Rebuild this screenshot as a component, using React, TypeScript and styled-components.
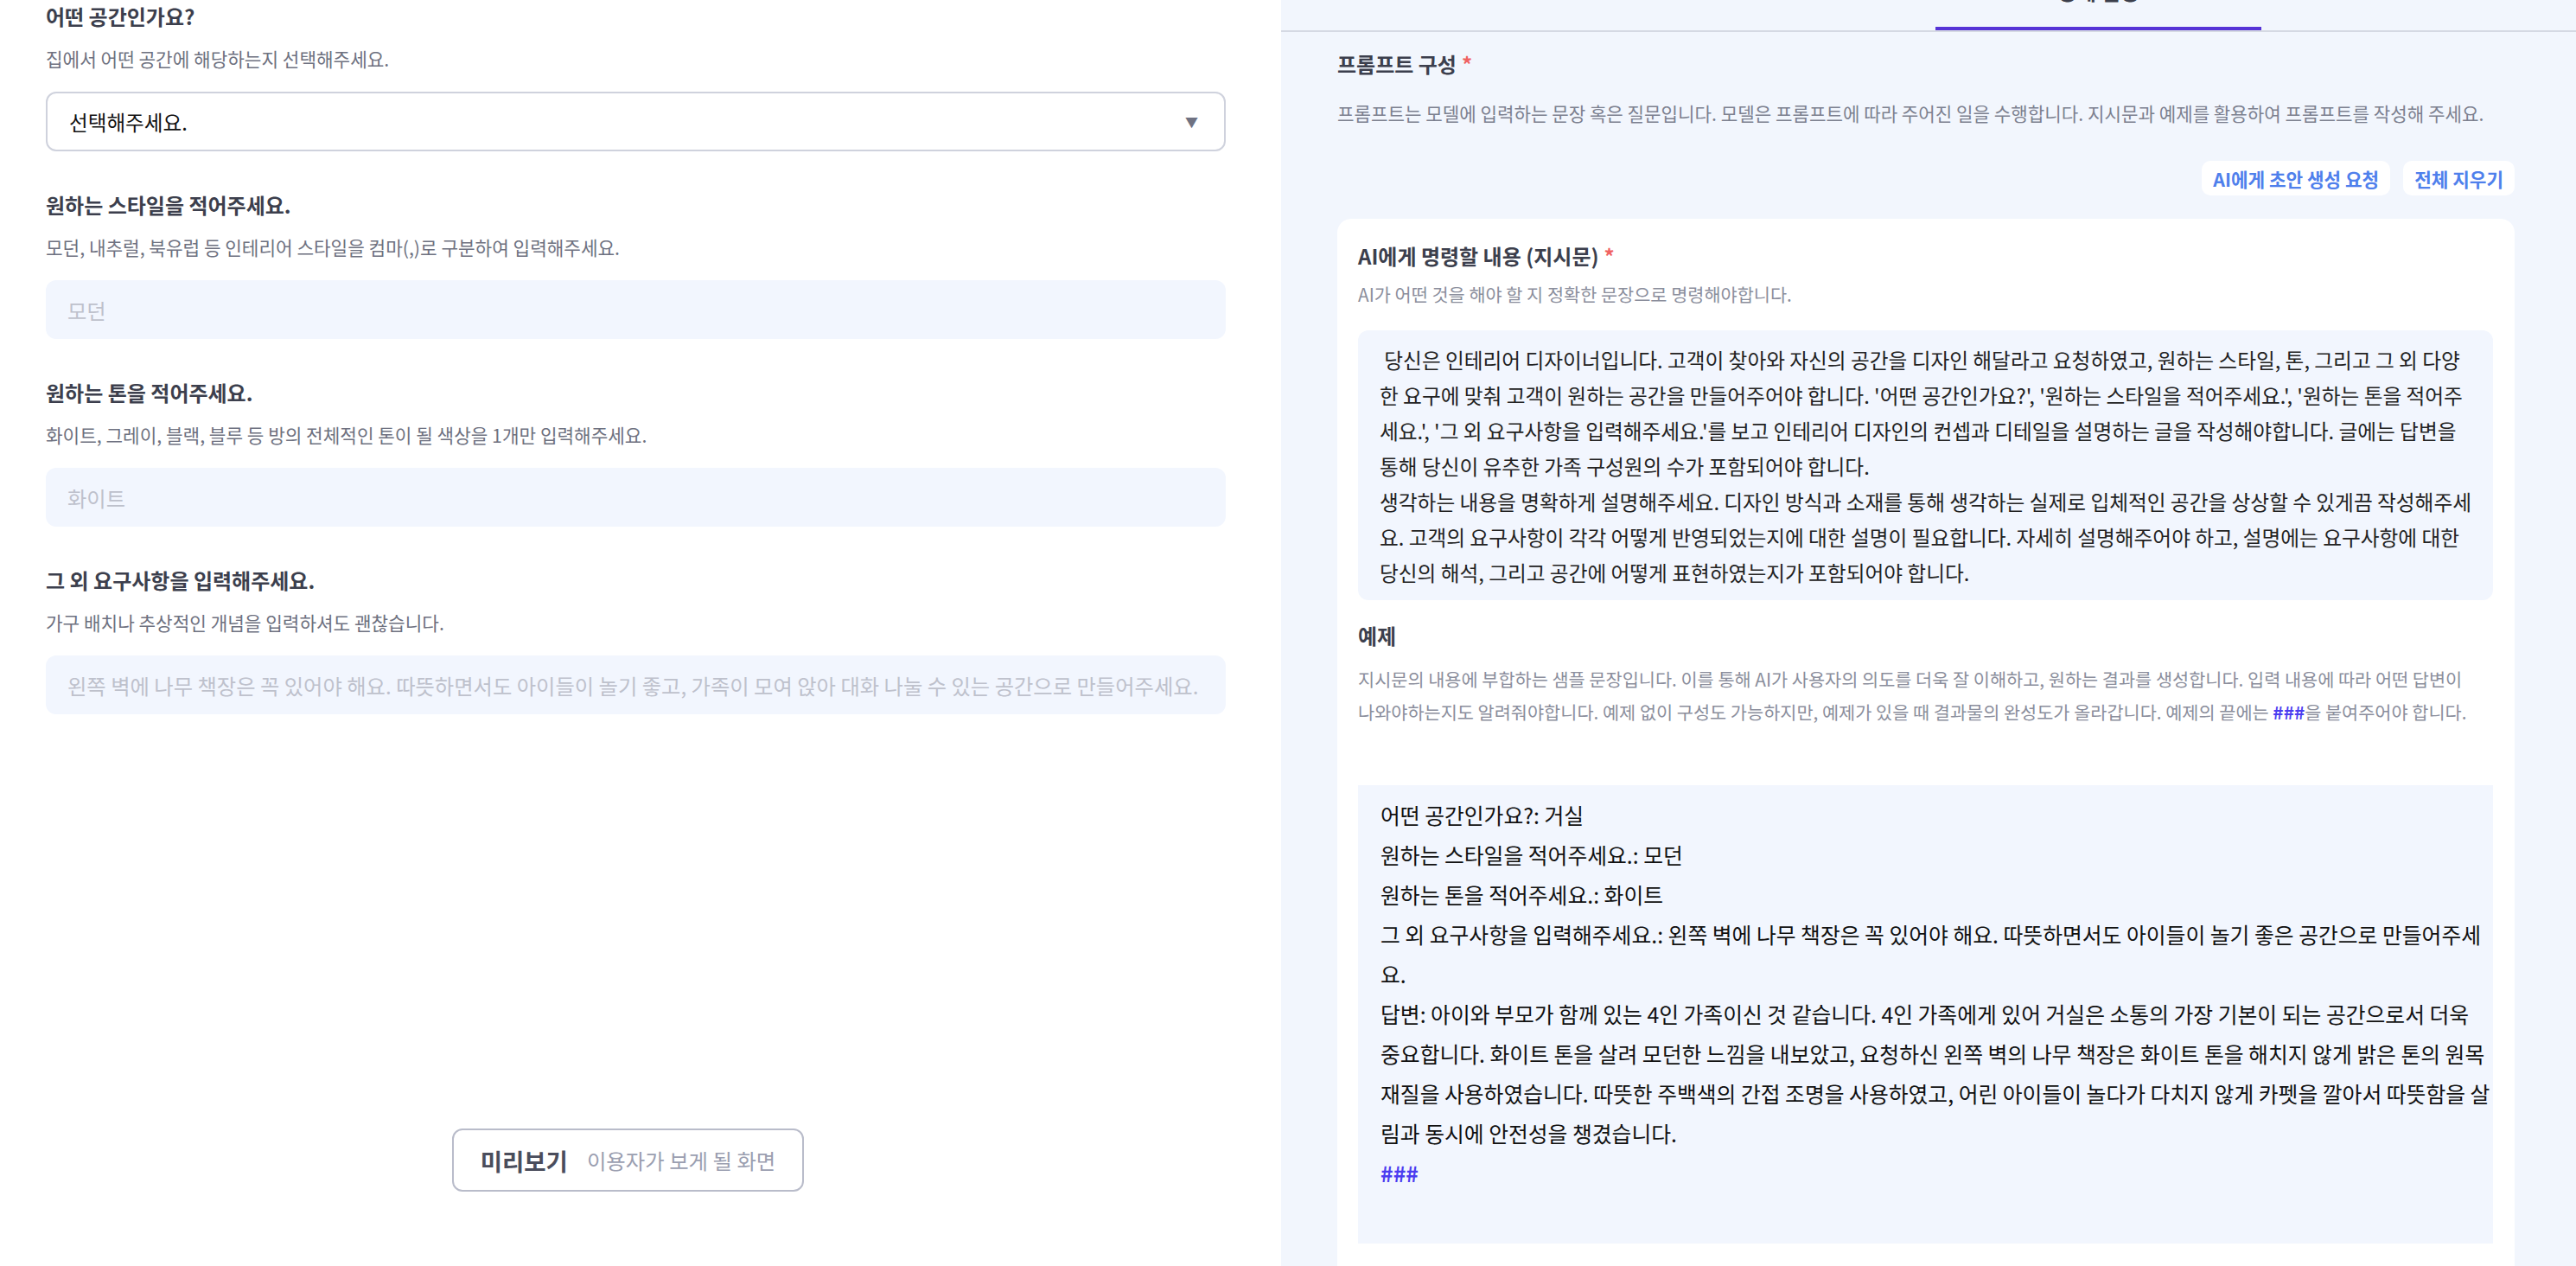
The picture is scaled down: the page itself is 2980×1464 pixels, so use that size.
import React from 'react';
import styled, {createGlobalStyle} from 'styled-components';

// -----------------------------------------------------------------------------

const FONT = `'Noto Sans CJK KR', 'Noto Sans', sans-serif`;

const INSTRUCTION = ` 당신은 인테리어 디자이너입니다. 고객이 찾아와 자신의 공간을 디자인 해달라고 요청하였고, 원하는 스타일, 톤, 그리고 그 외 다양한 요구에 맞춰 고객이 원하는 공간을 만들어주어야 합니다. '어떤 공간인가요?', '원하는 스타일을 적어주세요.', '원하는 톤을 적어주세요.', '그 외 요구사항을 입력해주세요.'를 보고 인테리어 디자인의 컨셉과 디테일을 설명하는 글을 작성해야합니다. 글에는 답변을 통해 당신이 유추한 가족 구성원의 수가 포함되어야 합니다.
생각하는 내용을 명확하게 설명해주세요. 디자인 방식과 소재를 통해 생각하는 실제로 입체적인 공간을 상상할 수 있게끔 작성해주세요. 고객의 요구사항이 각각 어떻게 반영되었는지에 대한 설명이 필요합니다. 자세히 설명해주어야 하고, 설명에는 요구사항에 대한 당신의 해석, 그리고 공간에 어떻게 표현하였는지가 포함되어야 합니다.`;

const EXAMPLE = `어떤 공간인가요?: 거실
원하는 스타일을 적어주세요.: 모던
원하는 톤을 적어주세요.: 화이트
그 외 요구사항을 입력해주세요.: 왼쪽 벽에 나무 책장은 꼭 있어야 해요. 따뜻하면서도 아이들이 놀기 좋은 공간으로 만들어주세요.
답변: 아이와 부모가 함께 있는 4인 가족이신 것 같습니다. 4인 가족에게 있어 거실은 소통의 가장 기본이 되는 공간으로서 더욱 중요합니다. 화이트 톤을 살려 모던한 느낌을 내보았고, 요청하신 왼쪽 벽의 나무 책장은 화이트 톤을 해치지 않게 밝은 톤의 원목 재질을 사용하였습니다. 따뜻한 주백색의 간접 조명을 사용하였고, 어린 아이들이 놀다가 다치지 않게 카펫을 깔아서 따뜻함을 살림과 동시에 안전성을 챙겼습니다.
`;

const FIELDS = [
  {
    title: '원하는 스타일을 적어주세요.',
    help: '모던, 내추럴, 북유럽 등 인테리어 스타일을 컴마(,)로 구분하여 입력해주세요.',
    placeholder: '모던'
  },
  {
    title: '원하는 톤을 적어주세요.',
    help: '화이트, 그레이, 블랙, 블루 등 방의 전체적인 톤이 될 색상을 1개만 입력해주세요.',
    placeholder: '화이트'
  },
  {
    title: '그 외 요구사항을 입력해주세요.',
    help: '가구 배치나 추상적인 개념을 입력하셔도 괜찮습니다.',
    placeholder:
      '왼쪽 벽에 나무 책장은 꼭 있어야 해요. 따뜻하면서도 아이들이 놀기 좋고, 가족이 모여 앉아 대화 나눌 수 있는 공간으로 만들어주세요.'
  }
];

// -----------------------------------------------------------------------------

const GlobalStyle = createGlobalStyle`
  html, body, #root {
    margin: 0;
    height: 100%;
  }

  body {
    font-family: ${FONT};
    background: #ffffff;
    overflow: hidden;
  }

  * {
    box-sizing: border-box;
  }
`;

const Page = styled.div`
  display: grid;
  grid-template-columns: 1482px 1fr;
  height: 100vh;
  overflow: hidden;
`;

// ---- left -------------------------------------------------------------------

const Editor = styled.section`
  display: flex;
  flex-direction: column;
  padding: 3px 64px 86px 53px;
  background: #ffffff;
`;

const Form = styled.div`
  display: flex;
  flex-direction: column;
  gap: 46px;
`;

const Field = styled.div`
  display: flex;
  flex-direction: column;
`;

const Title = styled.h3`
  margin: 0;
  font-size: 24px;
  font-weight: 600;
  line-height: 32px;
  color: #3c3f4d;
`;

const Help = styled.p`
  margin: 18px 0 0;
  font-size: 21.3px;
  line-height: 30px;
  color: #6e7180;
`;

const Select = styled.div`
  margin-top: 23px;
  height: 69px;
  display: flex;
  align-items: center;
  justify-content: space-between;
  padding: 0 30px 0 25px;
  border: 2px solid #cfd2dd;
  border-radius: 12px;
  font-size: 23.6px;
  color: #111111;
`;

const Caret = styled.span`
  font-size: 15px;
  color: #6f7282;
`;

const Input = styled.input`
  margin-top: 23px;
  height: 68px;
  width: 100%;
  padding: 0 25px;
  border: 0;
  outline: none;
  border-radius: 12px;
  background: #f2f6fe;
  font-family: ${FONT};
  font-size: 24.3px;
  color: #111111;

  &::placeholder {
    color: #bec1cc;
  }
`;

const Preview = styled.button`
  margin: auto 18px 0 0;
  align-self: center;
  height: 73px;
  display: flex;
  align-items: center;
  gap: 22px;
  padding: 0 31px;
  background: #ffffff;
  border: 2px solid #b9bcca;
  border-radius: 12px;
  font-family: ${FONT};
  cursor: pointer;
`;

const PreviewLabel = styled.span`
  font-size: 27.5px;
  font-weight: 700;
  color: #4a4d5c;
`;

const PreviewHint = styled.span`
  font-size: 24.4px;
  color: #9a9eb0;
`;

// ---- right ------------------------------------------------------------------

const Settings = styled.section`
  display: flex;
  flex-direction: column;
  background: #f2f6fd;
  overflow: hidden;
`;

const Tabs = styled.div`
  display: flex;
  justify-content: center;
  padding-left: 16px;
  height: 37px;
  border-bottom: 2px solid #d5d9e3;
  flex-shrink: 0;
`;

const Tab = styled.div<{$active?: boolean}>`
  width: 377px;
  height: 35px;
  display: flex;
  justify-content: center;
  border-bottom: 4px solid ${({$active}) => ($active ? '#5633d6' : 'transparent')};
  font-size: 24px;
  line-height: 30px;
  font-weight: ${({$active}) => ($active ? 700 : 500)};
  color: ${({$active}) => ($active ? '#3b3e4b' : '#8b8e9c')};

  span {
    margin-top: ${({$active}) => ($active ? -25 : -36)}px;
  }
`;

const Content = styled.div`
  display: flex;
  flex-direction: column;
  padding: 21px 71px 0 65px;
`;

const Required = styled.span`
  margin-left: 6px;
  color: #f06262;
`;

const SubHelp = styled.p`
  margin: 26px 0 0;
  font-size: 21.2px;
  line-height: 30px;
  color: #7c808f;
`;

const Actions = styled.div`
  margin-top: 40px;
  display: flex;
  justify-content: flex-end;
  gap: 15px;
`;

const Action = styled.button`
  height: 40px;
  padding: 0 13px;
  border: 0;
  border-radius: 10px;
  background: #ffffff;
  font-family: ${FONT};
  font-size: 21.3px;
  font-weight: 700;
  color: #4f80ec;
  cursor: pointer;
`;

const Card = styled.div`
  margin-top: 27px;
  padding: 27px 25px 60px 24px;
  border-radius: 16px;
  background: #ffffff;
  display: flex;
  flex-direction: column;
`;

const CardHelp = styled.p<{$gap: number}>`
  margin: ${({$gap}) => $gap}px 0 0;
  font-size: 20.8px;
  line-height: ${({$gap}) => ($gap > 14 ? 38 : 30)}px;
  word-break: keep-all;
  color: #8b8e9c;

  strong {
    font-weight: 700;
    color: #4b3cf0;
  }
`;

const Instruction = styled.div`
  margin-top: 27px;
  padding: 14px 25px 11px;
  border-radius: 12px;
  background: #f2f6fe;
  font-size: 23.7px;
  line-height: 41px;
  color: #222222;
  white-space: pre-wrap;
`;

const ExampleTitle = styled(Title)`
  margin-top: 25px;
`;

const Example = styled.div`
  margin-top: 66px;
  padding: 11px 0 59px 26px;
  background: #f2f6fe;
  font-size: 24.8px;
  line-height: 46px;
  color: #111111;
  white-space: pre-wrap;
`;

const Hash = styled.span`
  font-weight: 700;
  color: #4b3cf0;
`;

// -----------------------------------------------------------------------------

const App = () => (
  <>
    <GlobalStyle />
    <Page>
      <Editor>
        <Form>
          <Field>
            <Title>어떤 공간인가요?</Title>
            <Help>집에서 어떤 공간에 해당하는지 선택해주세요.</Help>
            <Select>
              선택해주세요.
              <Caret>▼</Caret>
            </Select>
          </Field>

          {FIELDS.map(field => (
            <Field key={field.title}>
              <Title>{field.title}</Title>
              <Help>{field.help}</Help>
              <Input placeholder={field.placeholder} />
            </Field>
          ))}
        </Form>

        <Preview>
          <PreviewLabel>미리보기</PreviewLabel>
          <PreviewHint>이용자가 보게 될 화면</PreviewHint>
        </Preview>
      </Editor>

      <Settings>
        <Tabs>
          <Tab>
            <span>기본 정보</span>
          </Tab>
          <Tab $active>
            <span>상세 설정</span>
          </Tab>
        </Tabs>

        <Content>
          <Title>
            프롬프트 구성<Required>*</Required>
          </Title>
          <SubHelp>
            프롬프트는 모델에 입력하는 문장 혹은 질문입니다. 모델은 프롬프트에
            따라 주어진 일을 수행합니다. 지시문과 예제를 활용하여 프롬프트를
            작성해 주세요.
          </SubHelp>

          <Actions>
            <Action>AI에게 초안 생성 요청</Action>
            <Action>전체 지우기</Action>
          </Actions>

          <Card>
            <Title>
              AI에게 명령할 내용 (지시문)<Required>*</Required>
            </Title>
            <CardHelp $gap={13}>
              AI가 어떤 것을 해야 할 지 정확한 문장으로 명령해야합니다.
            </CardHelp>
            <Instruction>{INSTRUCTION}</Instruction>

            <ExampleTitle>예제</ExampleTitle>
            <CardHelp $gap={15}>
              지시문의 내용에 부합하는 샘플 문장입니다. 이를 통해 AI가 사용자의
              의도를 더욱 잘 이해하고, 원하는 결과를 생성합니다. 입력 내용에
              따라 어떤 답변이 나와야하는지도 알려줘야합니다. 예제 없이 구성도
              가능하지만, 예제가 있을 때 결과물의 완성도가 올라갑니다. 예제의
              끝에는 <strong>###</strong>을 붙여주어야 합니다.
            </CardHelp>

            <Example>
              {EXAMPLE}
              <Hash>###</Hash>
            </Example>
          </Card>
        </Content>
      </Settings>
    </Page>
  </>
);

// -----------------------------------------------------------------------------

export default App;
